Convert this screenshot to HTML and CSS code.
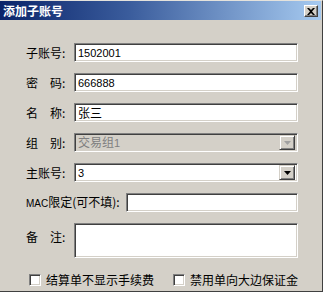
FILE: index.html
```html
<!DOCTYPE html>
<html lang="zh-CN">
<head>
<meta charset="utf-8">
<title>添加子账号</title>
<link rel="stylesheet" href="styles.css">
</head>
<body>
<div class="dialog">
  <div class="titlebar">
    <span class="title">添加子账号</span>
    <span class="close-btn">
      <svg width="8" height="7" viewBox="0 0 8 7"><path d="M0 0h2l2 2 2-2h2L5 3.5 8 7H6L4 5 2 7H0l3-3.5z" fill="#000"/></svg>
    </span>
  </div>
  <div class="form">
    <div class="row">
      <span class="label">子账号:</span>
      <div class="field"><span class="num">1502001</span></div>
    </div>
    <div class="row">
      <span class="label">密　码:</span>
      <div class="field"><span class="num">666888</span></div>
    </div>
    <div class="row">
      <span class="label">名　称:</span>
      <div class="field">张三</div>
    </div>
    <div class="row">
      <span class="label">组　别:</span>
      <div class="field select disabled">
        <span class="sel-text">交易组<span class="num">1</span></span>
        <span class="drop-btn"><svg width="7" height="4" viewBox="0 0 7 4"><path d="M0 0h7L3.5 4z" fill="#a0a0a0"/></svg></span>
      </div>
    </div>
    <div class="row">
      <span class="label">主账号:</span>
      <div class="field select">
        <span class="sel-text"><span class="num">3</span></span>
        <span class="drop-btn"><svg width="7" height="4" viewBox="0 0 7 4"><path d="M0 0h7L3.5 4z" fill="#000"/></svg></span>
      </div>
    </div>
    <div class="row">
      <span class="label label-wide"><span class="mac">MAC</span>限定(可不填):</span>
      <div class="field"></div>
    </div>
    <div class="row row-tall">
      <span class="label">备　注:</span>
      <div class="field area"></div>
    </div>
    <div class="checks">
      <label class="check check-first"><span class="box"></span>结算单不显示手续费</label>
      <label class="check"><span class="box"></span>禁用单向大边保证金</label>
    </div>
  </div>
</div>
</body>
</html>
```
FILE: styles.css
```css
* { box-sizing: border-box; }
html, body { margin: 0; padding: 0; background: #ffffff; }
body {
  font-family: "Noto Sans CJK SC", "Liberation Sans", sans-serif;
  font-size: 12px;
  color: #000;
}
.dialog {
  width: 323px;
  height: 292px;
  background: #d4d0c8;
  border-top: 1px solid #e4e2dc;
  border-right: 1px solid #404040;
  border-bottom: 1px solid #404040;
}
.titlebar {
  height: 19px;
  margin-right: 1px;
  background: linear-gradient(to right, #0a246a 0%, #3a5c9c 40%, #a6caf0 100%);
  display: flex;
  align-items: center;
  justify-content: space-between;
  padding: 0 3px 0 3px;
}
.title {
  color: #fff;
  font-weight: bold;
  font-size: 12px;
  line-height: 19px;
}
.close-btn {
  width: 14px;
  height: 12px;
  background: #d4d0c8;
  border: 1px solid;
  border-color: #fff #404040 #404040 #fff;
  box-shadow: inset -1px -1px #808080;
  display: flex;
  align-items: center;
  justify-content: center;
  margin-top: 1px;
}
.close-btn svg { display: block; }
.form {
  padding: 23px 24px 0 26px;
  display: flex;
  flex-direction: column;
  gap: 11px;
}
.row {
  display: flex;
  align-items: center;
  height: 19px;
}
.row-tall {
  height: 35px;
  align-items: flex-start;
}
.row-tall .label { padding-top: 7px; }
.label {
  width: 48px;
  flex: none;
  line-height: 14px;
  white-space: nowrap;
}
.label-wide { width: 100px; }
.mac {
  font-family: "Liberation Sans", sans-serif;
  font-size: 10px;
}
.field {
  flex: 1;
  height: 19px;
  background: #fff;
  border: 1px solid;
  border-color: #808080 #fff #fff #808080;
  box-shadow: inset 1px 1px #404040, inset -1px -1px #d4d0c8;
  padding: 0 3px;
  display: flex;
  align-items: center;
  line-height: 14px;
  white-space: nowrap;
}
.num {
  font-family: "Liberation Sans", sans-serif;
  font-size: 11px;
}
.area { height: 35px; }
.select { padding: 0 2px 0 3px; }
.sel-text { flex: 1; }
.disabled { background: #d4d0c8; color: #808080; }
.drop-btn {
  width: 16px;
  height: 15px;
  background: #d4d0c8;
  border: 1px solid;
  border-color: #d4d0c8 #404040 #404040 #d4d0c8;
  box-shadow: inset 1px 1px #fff, inset -1px -1px #808080;
  display: flex;
  align-items: center;
  justify-content: center;
}
.drop-btn svg { display: block; }
.checks {
  display: flex;
  margin-top: 4px;
  padding-left: 3px;
  height: 13px;
  align-items: center;
}
.check {
  display: flex;
  align-items: center;
  gap: 5px;
  line-height: 14px;
  white-space: nowrap;
}
.check-first { width: 145px; }
.box {
  width: 12px;
  height: 12px;
  background: #fff;
  border: 1px solid;
  border-color: #808080 #fff #fff #808080;
  box-shadow: inset 1px 1px #404040, inset -1px -1px #d4d0c8;
}
```
